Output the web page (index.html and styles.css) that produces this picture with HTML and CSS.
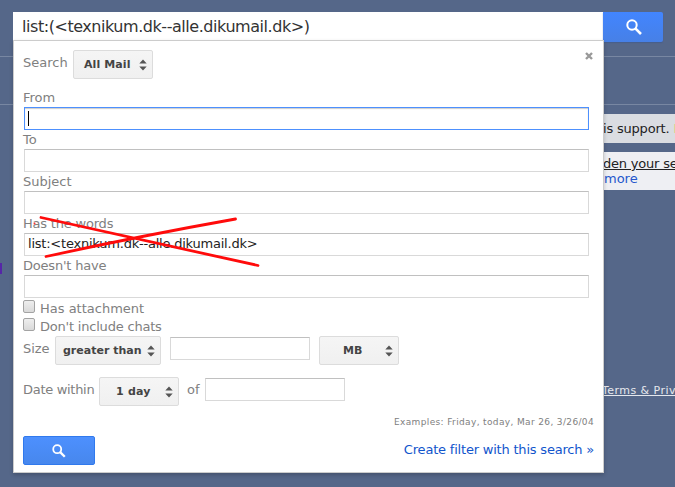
FILE: index.html
```html
<!DOCTYPE html>
<html lang="en">
<head>
<meta charset="utf-8">
<title>Mail search</title>
<link rel="stylesheet" href="styles.css">
</head>
<body>
<main class="page">
  <div class="toolbar"></div>
  <div class="mail">
    <div class="notice notice-support">is support. <span class="accent">D</span></div>
    <div class="notice notice-tip"><u>den your se</u><br><a>more</a></div>
    <div class="legal"><u>Terms &amp; Priv</u></div>
  </div>
  <i class="marker"></i>

  <section class="search">
    <div class="bar">
      <div class="query">list:(&lt;texnikum.dk--alle.dikumail.dk&gt;)</div>
      <div class="go"><svg width="18" height="18" viewBox="0 0 18 18"><circle cx="7" cy="7" r="4.7"/><path d="M10.3 10.3 16 16"/></svg></div>
    </div>
    <form class="panel">
      <svg class="close" width="8" height="8" viewBox="0 0 8 8"><path d="M1 1 7 7M7 1 1 7"/></svg>
      <div class="row scope"><span class="label w-search">Search</span><div class="select w80"><b class="t-mail">All Mail</b><svg class="arrows" width="8" height="12" viewBox="0 0 8 12"><path d="M.3 4.500 4 .5 7.700 4.500ZM.3 7.500 7.700 7.500 4 11.500Z"/></svg></div></div>
      <div class="label field-label"><span class="t-from">From</span></div>
      <div class="input focus"><i class="caret"></i></div>
      <div class="label field-label"><span>To</span></div>
      <div class="input"></div>
      <div class="label field-label"><span>Subject</span></div>
      <div class="input"></div>
      <div class="label field-label"><span class="tight">Has the words</span></div>
      <div class="input"><span class="value">list:&lt;texnikum.dk--alle.dikumail.dk&gt;</span></div>
      <div class="label field-label"><span class="tight">Doesn't have</span></div>
      <div class="input"></div>
      <div class="label check"><i class="box"></i><span>Has attachment</span></div>
      <div class="label check"><i class="box"></i><span class="tight">Don't include chats</span></div>
      <div class="row size"><span class="label w-size">Size</span><div class="select w106"><b class="t-greater">greater than</b><svg class="arrows" width="8" height="12" viewBox="0 0 8 12"><path d="M.3 4.500 4 .5 7.700 4.500ZM.3 7.500 7.700 7.500 4 11.500Z"/></svg></div><div class="input short"></div><div class="select w80 unit"><b class="t-mb">MB</b><svg class="arrows" width="8" height="12" viewBox="0 0 8 12"><path d="M.3 4.500 4 .5 7.700 4.500ZM.3 7.500 7.700 7.500 4 11.500Z"/></svg></div></div>
      <div class="row date"><span class="label w-date">Date within</span><div class="select w80"><b class="t-day">1 day</b><svg class="arrows" width="8" height="12" viewBox="0 0 8 12"><path d="M.3 4.500 4 .5 7.700 4.500ZM.3 7.500 7.700 7.500 4 11.500Z"/></svg></div><span class="label of">of</span><div class="input short day"></div></div>
      <div class="examples"><span>Examples: Friday, today, Mar 26, 3/26/04</span></div>
      <div class="actions"><div class="submit"><svg width="16" height="16" viewBox="0 0 18 18"><circle cx="7" cy="7" r="4.5"/><path d="M10.3 10.3 15.500 15.500"/></svg></div><a class="filter">Create filter with this search »</a></div>
    </form>
  </section>

  <svg class="cross" width="675" height="487" viewBox="0 0 675 487"><path d="M41 217.5Q140 239 258 265.5M46 256.5Q140 236 235.500 219"/><circle cx="34.500" cy="223.500" r="1"/></svg>
</main>
</body>
</html>
```
FILE: styles.css
```css
* { box-sizing: border-box; }
body {
  margin: 0;
  background: #556789;
  font: 13px/16px "DejaVu Sans", sans-serif;
}
.page {
  position: relative;
  width: 675px;
  height: 487px;
  padding-top: 56px;
  overflow: hidden;
}
.toolbar {
  height: 49px;
  border-top: 1px solid #7887a2;
  border-bottom: 1px solid #7887a2;
}
.mail { padding: 9px 0 0 603px; white-space: nowrap; }
.notice { color: #222; }
.notice-support {
  height: 29px;
  padding-top: 7px;
  background: #dadde2;
  letter-spacing: -.2px;
}
.accent { color: #e0d28b; }
.notice-tip {
  height: 38px;
  margin-top: 9px;
  padding-top: 4px;
  line-height: 15px;
  background: #eeeff3;
}
.notice-tip u { letter-spacing: -.2px; }
.notice-tip a { color: #2457cc; margin-left: 1px; }
.legal {
  margin: 192px 0 0 -1px;
  font-size: 11px;
  line-height: 17px;
  letter-spacing: .45px;
  color: #e5e8ed;
}
.marker {
  position: absolute;
  left: 0;
  top: 263px;
  width: 2px;
  height: 11px;
  background: #5626a8;
}
.search {
  position: absolute;
  left: 13px;
  top: 12px;
}
.bar { display: flex; width: 650px; height: 30px; }
.query {
  width: 590px;
  height: 28px;
  padding: 5px 0 0 9px;
  background: #fff;
  color: #333;
  font-size: 16px;
  line-height: 20px;
  letter-spacing: -.45px;
  white-space: nowrap;
}
.go {
  display: flex;
  align-items: center;
  justify-content: center;
  width: 60px;
  height: 30px;
  background: linear-gradient(#4285ff, #4780e6);
  border-radius: 0 2px 2px 0;
  box-shadow: 0 1px 1px #485f8c;
}
.go svg, .submit svg { fill: none; stroke: #fff; stroke-width: 2; }
.go svg { margin-left: 2px; }
.go path, .submit path { stroke-width: 2.6; }
.panel {
  position: relative;
  width: 591px;
  height: 433px;
  margin-top: -2px;
  padding: 9px 14px 0 10px;
  background: #fff;
  border: 1px solid #ccc;
  box-shadow: 0 2px 4px rgba(0, 0, 0, .2);
}
.close {
  position: absolute;
  right: 10px;
  top: 11px;
  fill: none;
  stroke: #999;
  stroke-width: 2.4;
}
.label { color: #808080; white-space: nowrap; }
.tight { letter-spacing: -.2px; }
.row { display: flex; height: 29px; }
.row .label { padding-top: 5px; margin-left: -1px; }
.scope { margin-bottom: 9px; }
.w-search { width: 50px; }
.w-size { width: 32px; letter-spacing: -.1px; }
.w-date { width: 76px; letter-spacing: -.3px; }
.select {
  display: flex;
  align-items: center;
  justify-content: space-between;
  height: 29px;
  padding: 0 5px 0 10px;
  border: 1px solid #dcdcdc;
  border-radius: 2px;
  background: linear-gradient(#f5f5f5, #f0f0f0);
  color: #444;
  font-size: 11px;
  white-space: nowrap;
}
.w80 { width: 80px; }
.w106 { width: 106px; padding-left: 7px; }
.arrows { fill: #555; }
.t-mail { letter-spacing: .1px; }
.t-mb { margin-left: 13px; }
.t-day { margin-left: 6px; letter-spacing: .2px; }
.field-label { height: 19px; margin-left: -1px; padding-top: 2px; }
.input {
  display: flex;
  align-items: center;
  height: 23px;
  padding-left: 3px;
  border: 1px solid #d9d9d9;
  border-top-color: #c0c0c0;
  background: #fff;
}
.input.focus {
  border-color: #4d90fe;
  box-shadow: inset 0 1px 1px #ccc;
}
.caret { width: 1px; height: 15px; background: #000; }
.value {
  margin-top: -2px;
  color: #222;
  letter-spacing: -.22px;
  white-space: nowrap;
}
.check { display: flex; height: 18px; margin-left: -1px; padding-top: 2px; }
.box {
  width: 12px;
  height: 13px;
  margin-right: 5px;
  border: 1px solid #a3a3a3;
  border-radius: 2px;
  background: linear-gradient(#eee, #d9d9d9);
}
.check span { padding-top: 1px; }
.size { margin-top: 2px; }
.short { width: 140px; margin: 1px 0 0 9px; }
.unit { margin-left: 9px; }
.date { margin-top: 12px; }
.row .of { width: 18px; margin-left: 8px; }
.input.day { margin-left: 0; }
.examples {
  height: 30px;
  padding: 8px 0 0 370px;
  color: #808080;
  font-size: 9px;
  letter-spacing: .36px;
  white-space: nowrap;
}
.actions { display: flex; justify-content: space-between; margin: 0 -5px 0 -1px; }
.submit {
  display: flex;
  align-items: center;
  justify-content: center;
  width: 72px;
  height: 29px;
  border: 1px solid #3079ed;
  border-radius: 2px;
  background: linear-gradient(#4d90fe, #4787ed);
}
.filter {
  padding-top: 6px;
  color: #1155cc;
  letter-spacing: -.2px;
  white-space: nowrap;
}
.cross {
  position: absolute;
  left: 0;
  top: 0;
  fill: none;
  stroke: #ff0b0b;
  stroke-width: 2.8;
  stroke-linecap: round;
}
.cross circle { fill: #ff3838; stroke: none; }
```
